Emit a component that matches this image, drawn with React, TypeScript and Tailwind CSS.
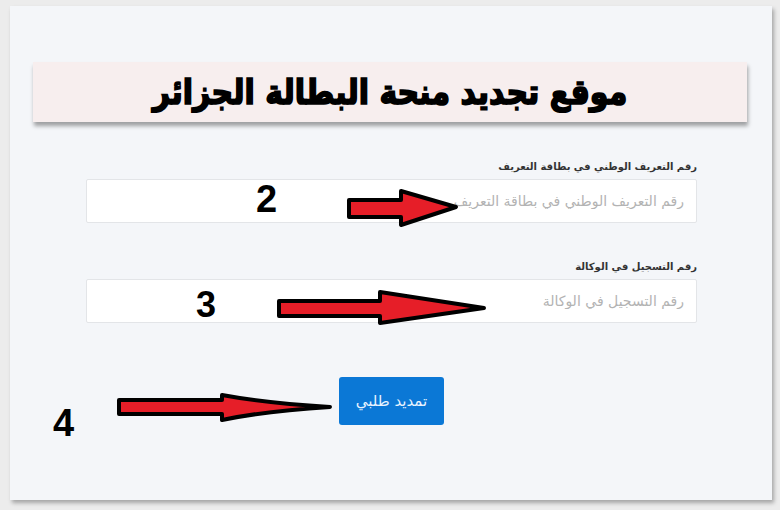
import React from 'react';

const arabic = { fontFamily: '"DejaVu Sans", "Noto Sans", sans-serif' };
const digits = { fontFamily: '"Liberation Sans", Arial, sans-serif' };

function Field({ label, placeholder }: { label: string; placeholder: string }) {
  return (
    <div className="flex flex-col">
      <label className="text-[10px] font-bold leading-4 text-[#333] text-right mb-1" style={arabic}>
        {label}
      </label>
      <input
        dir="rtl"
        placeholder={placeholder}
        className="h-[44px] w-full bg-white border border-[#e3e5e8] rounded-[2px] px-3 text-[14px] placeholder:text-[#b3b3b3] outline-none"
        style={arabic}
      />
    </div>
  );
}

export default function App() {
  return (
    <div className="relative w-[780px] h-[510px] bg-[#ececec] pt-[6px] pl-[10px] overflow-hidden">
      <div className="w-[762px] h-[494px] bg-[#f4f6f9] shadow-[2px_3px_4px_rgba(0,0,0,0.3)] flex flex-col pt-[56px]">
        <div className="ml-[23px] w-[714px] h-[60px] bg-[#f7eeee] shadow-[1px_4px_4px_rgba(0,0,0,0.35)] flex items-center justify-center">
          <h1
            dir="rtl"
            className="text-[30px] font-bold text-black leading-none [-webkit-text-stroke:1.5px_black] scale-y-[1.15]"
            style={arabic}
          >
            موقع تجديد منحة البطالة الجزائر
          </h1>
        </div>

        <form dir="rtl" className="ml-[76px] w-[611px] mt-[37px] flex flex-col" onSubmit={(e) => e.preventDefault()}>
          <Field label="رقم التعريف الوطني في بطاقة التعريف" placeholder="رقم التعريف الوطني في بطاقة التعريف" />
          <div className="mt-[36px]">
            <Field label="رقم التسجيل في الوكالة" placeholder="رقم التسجيل في الوكالة" />
          </div>
          <div className="mt-[54px] flex justify-center">
            <button
              type="submit"
              className="w-[105px] h-[48px] bg-[#0b78d6] rounded-[3px] text-[15px] text-[#e8f3ff]"
              style={arabic}
            >
              تمديد طلبي
            </button>
          </div>
        </form>
      </div>

      {/* annotations */}
      <span className="absolute left-[256px] top-[180px] text-[38px] font-bold leading-none text-black" style={digits}>2</span>
      <span className="absolute left-[196px] top-[287px] text-[36px] font-bold leading-none text-black" style={digits}>3</span>
      <span className="absolute left-[53px] top-[404px] text-[38px] font-bold leading-none text-black" style={digits}>4</span>

      <svg className="absolute left-[345px] top-[187px]" width="115" height="42" viewBox="0 0 115 42">
        <polygon points="4,13 56,13 56,4 111,20 56,38 56,30 4,30" fill="#e61e28" stroke="#000" strokeWidth="4" strokeLinejoin="round" />
      </svg>
      <svg className="absolute left-[275px] top-[288px]" width="213" height="39" viewBox="0 0 213 39">
        <polygon points="4,13 105,13 105,4 209,20 105,35 105,28 4,28" fill="#e61e28" stroke="#000" strokeWidth="4" strokeLinejoin="round" />
      </svg>
      <svg className="absolute left-[115px] top-[391px]" width="219" height="33" viewBox="0 0 219 33">
        <path d="M4,9 L107,9 L107,4 Q150,12 215,16 Q150,20 107,29 L107,23 L4,23 Z" fill="#e61e28" stroke="#000" strokeWidth="4" strokeLinejoin="round" />
      </svg>
    </div>
  );
}
